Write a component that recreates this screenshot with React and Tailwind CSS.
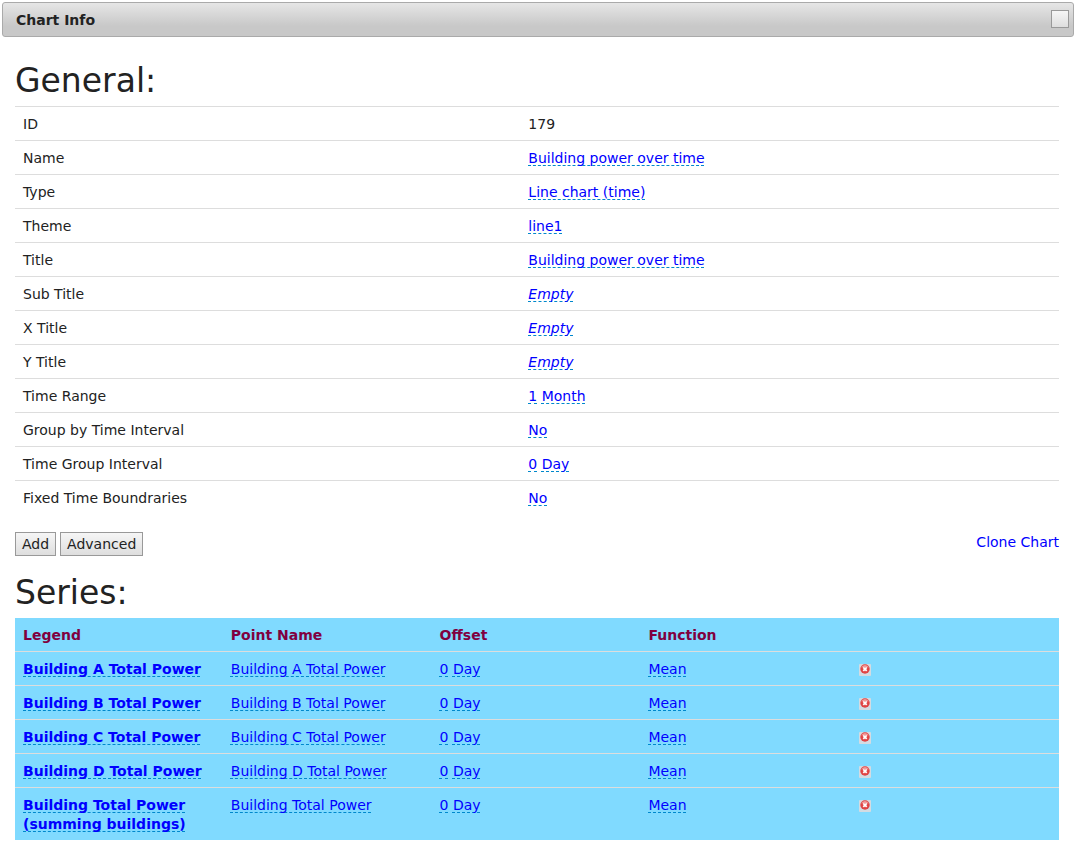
import React from "react";

const general = [
  ["ID", null],
  ["Name", ["Building power over time"]],
  ["Type", ["Line chart (time)"]],
  ["Theme", ["line1"]],
  ["Title", ["Building power over time"]],
  ["Sub Title", []],
  ["X Title", []],
  ["Y Title", []],
  ["Time Range", ["1", "Month"]],
  ["Group by Time Interval", ["No"]],
  ["Time Group Interval", ["0", "Day"]],
  ["Fixed Time Boundraries", ["No"]],
];

const series = [
  ["Building A Total Power", "Building A Total Power"],
  ["Building B Total Power", "Building B Total Power"],
  ["Building C Total Power", "Building C Total Power"],
  ["Building D Total Power", "Building D Total Power"],
  ["Building Total Power (summing buildings)", "Building Total Power"],
];

function Editable({ children, className = "" }) {
  return (
    <a
      href="#"
      className={`text-[#0000ff] underline decoration-dashed decoration-1 decoration-[#0088cc] underline-offset-2 [text-decoration-skip-ink:none] ${className}`}
    >
      {children}
    </a>
  );
}

function EditableGroup({ values }) {
  if (values.length === 0) return <Editable className="italic">Empty</Editable>;
  return values.map((value, i) => (
    <React.Fragment key={value}>
      {i > 0 && " "}
      <Editable>{value}</Editable>
    </React.Fragment>
  ));
}

function DeleteIcon() {
  return (
    <svg width="12" height="12" viewBox="0 0 12 12" aria-hidden="true">
      <rect width="12" height="12" rx="1" fill="#d3dbe2" />
      <circle cx="6" cy="5" r="4.7" fill="#e04444" />
      <path d="M2.2 3.6a4.1 4.1 0 0 1 7.6 0Q6 2.2 2.2 3.6Z" fill="#f09a9a" />
      <path d="M4.3 3.4l3.4 3.4M7.7 3.4L4.3 6.8" stroke="#fff" strokeWidth="1.8" />
    </svg>
  );
}

const buttonStyle =
  "h-6 border border-[#999] bg-linear-to-b from-[#f6f6f6] to-[#dedede] px-1.5 leading-[19px] text-[#222]";
const labelCell = "px-2 pt-2 pb-1.5 text-left";
const valueCell = "px-[7px] pt-2 pb-1.5 text-left";
const rowLine = "border-t border-[#ddd]";

export default function App() {
  return (
    <div className="min-h-screen bg-white pt-0.5 pr-px pl-0.5 font-['Verdana','DejaVu_Sans',sans-serif] text-[14px] leading-[19px] text-[#222]">
      <header className="flex h-[35px] items-center justify-between rounded-[3px] border border-[#aaa] bg-linear-to-b from-[#e6e6e6] to-[#c8c8c8] to-70% pr-1 pl-[13px]">
        <h1 className="pt-px font-bold">Chart Info</h1>
        <button
          type="button"
          aria-label="Close"
          className="mb-px size-[18px] border border-[#999] bg-linear-to-b from-[#f6f6f6] to-[#dedede]"
        />
      </header>

      <main className="pt-[22px] pr-[15px] pl-[13px]">
        <h2 className="pb-[3px] text-[33px] leading-11">General:</h2>
        <table className="w-full table-fixed border-separate border-spacing-0">
          <colgroup>
            <col className="w-[48.5%]" />
            <col />
          </colgroup>
          <tbody>
            {general.map(([label, values]) => (
              <tr key={label}>
                <th scope="row" className={`${labelCell} ${rowLine} font-normal`}>
                  {label}
                </th>
                <td className={`${valueCell} ${rowLine}`}>
                  {values ? <EditableGroup values={values} /> : "179"}
                </td>
              </tr>
            ))}
          </tbody>
        </table>

        <div className="flex items-start justify-between pt-[18px]">
          <div className="flex gap-1">
            <button type="button" className={buttonStyle}>Add</button>
            <button type="button" className={buttonStyle}>Advanced</button>
          </div>
          <a href="#" className="pt-px text-[#0000ff]">Clone Chart</a>
        </div>

        <h2 className="pt-[15px] pb-[3px] text-[33px] leading-11">Series:</h2>
        <table className="w-full table-fixed border-separate border-spacing-0 bg-[#80daff]">
          <thead>
            <tr className="text-[#800040]">
              <th className={labelCell}>Legend</th>
              <th className={valueCell}>Point Name</th>
              <th className={valueCell}>Offset</th>
              <th className={valueCell}>Function</th>
              <td className={valueCell} />
            </tr>
          </thead>
          <tbody>
            {series.map(([legend, point]) => (
              <tr key={legend} className="align-top">
                <th scope="row" className={`${labelCell} ${rowLine}`}>
                  <Editable>{legend}</Editable>
                </th>
                <td className={`${valueCell} ${rowLine}`}>
                  <Editable>{point}</Editable>
                </td>
                <td className={`${valueCell} ${rowLine}`}>
                  <EditableGroup values={["0", "Day"]} />
                </td>
                <td className={`${valueCell} ${rowLine}`}>
                  <EditableGroup values={["Mean"]} />
                </td>
                <td className={`${rowLine} px-[9px] pt-2 pb-1.5`}>
                  <button type="button" aria-label={`Delete ${legend}`} className="flex h-[19px] items-center">
                    <DeleteIcon />
                  </button>
                </td>
              </tr>
            ))}
          </tbody>
        </table>
      </main>
    </div>
  );
}
